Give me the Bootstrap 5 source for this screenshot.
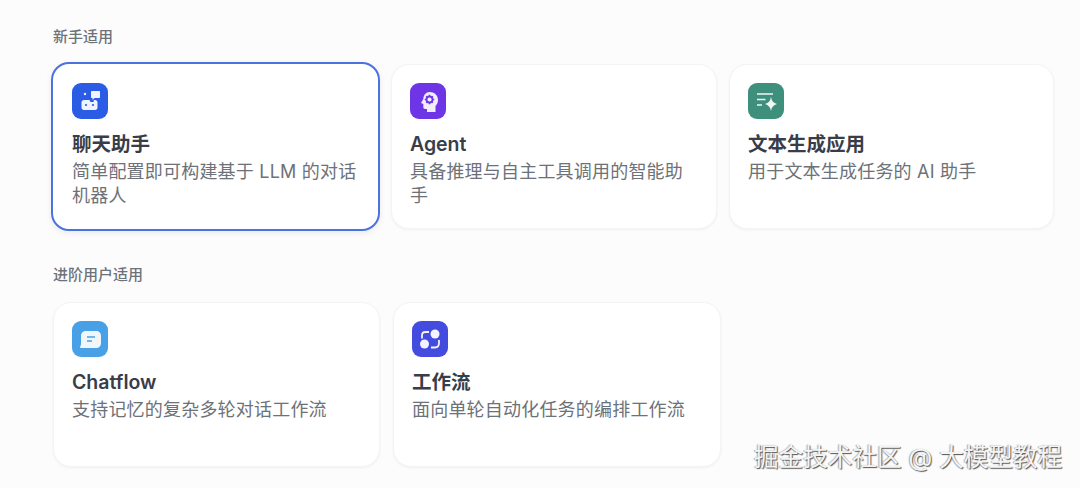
<!DOCTYPE html>
<html lang="zh-CN">
<head>
  <meta charset="UTF-8">
  <meta name="viewport" content="width=device-width, initial-scale=1.0">
  <title>创建应用</title>
  <link href="https://cdn.jsdelivr.net/npm/bootstrap@5.3.0/dist/css/bootstrap.min.css" rel="stylesheet">
  <style>
    html, body { height: 488px; overflow: hidden; }
    body { background: #fcfcfd; font-family: Inter, "Noto Sans CJK SC", sans-serif; }
    .app-page { padding: 28px 0 0 53px; position: relative; height: 488px; }
    .group-label { font-size: 15px; line-height: 18px; font-weight: 500; color: #6d7178; margin: 0; }
    .group-b { margin-top: 35px; }
    .app-row { display: flex; align-items: center; margin-top: 16px; height: 169px; }
    .app-row-b { margin-top: 18px; height: 165px; }
    .app-card { height: 165px; padding: 18px 18px 0 18px; background: #fff; border: 1px solid #f3f4f6; border-radius: 18px; box-shadow: 0 1px 3px rgba(16,24,40,.05); }
    .card-chat { width: 329px; height: 169px; margin-left: -2px; margin-right: 11px; border: 2px solid #4a72e0; padding: 19px 18px 0 19px; box-shadow: 0 2px 6px rgba(16,24,40,.08); }
    .card-agent { width: 326px; margin-right: 12px; }
    .card-text { width: 325px; }
    .card-flow { width: 327px; margin-right: 13px; }
    .card-work { width: 328px; }
    .app-icon { width: 36px; height: 36px; border-radius: 9px; display: flex; align-items: center; justify-content: center; }
    .icon-blue { background: #2b5ce6; }
    .icon-purple { background: #6d35e6; }
    .icon-green { background: #3f8f7d; }
    .icon-sky { background: #48a1e6; }
    .icon-indigo { background: #444ce0; }
    .app-title { font-size: 19.5px; line-height: 26px; font-weight: 600; color: #393d48; margin: 12px 0 0; }
    .app-desc { font-size: 18px; line-height: 24px; letter-spacing: .2px; color: #6d7178; margin: 3px 0 0; }
    .site-mark { position: absolute; left: 754px; top: 441px; font-size: 24.6px; line-height: 32px; white-space: nowrap; color: #f4f4f4; text-shadow: 1px 1px 1px #555, -1px 0 1px #aaa; }
  </style>
</head>
<body>
  <div class="app-page">
    <p class="group-label">新手适用</p>
    <div class="app-row">
      <div class="app-card card-chat">
        <div class="app-icon icon-blue">
          <svg width="24" height="24" viewBox="0 0 24 24" fill="#eef3ff">
            <circle cx="7" cy="5" r="1.200"/>
            <path d="M14 2h7c.7 0 1 .3 1 1v5c0 .7-.3 1-1 1h-4.500l-2 2V9H14c-.7 0-1-.3-1-1V3c0-.7.3-1 1-1z"/>
            <path d="M6 11h5.500l1 2h3l.5-2h1c1.500 0 2.500 1 2.500 2.500v5c0 1.500-1 2.500-2.500 2.500H6c-1.500 0-2.500-1-2.500-2.500v-5C3.500 12 4.500 11 6 11z"/>
            <circle cx="8" cy="16" r="1.100" fill="#2b5ce6"/>
            <circle cx="15" cy="16" r="1.100" fill="#2b5ce6"/>
          </svg>
        </div>
        <h3 class="app-title">聊天助手</h3>
        <p class="app-desc">简单配置即可构建基于 LLM 的对话机器人</p>
      </div>
      <div class="app-card card-agent">
        <div class="app-icon icon-purple">
          <svg width="24" height="24" viewBox="0 0 24 24" fill="#f1edfd">
            <path d="M13.500 3C18.500 3 22 6.500 22 11c0 2.500-1 4.500-2.500 6v6H11v-3H9c-1 0-1.700-.7-1.700-1.700V15L5 14l2.300-4C7.500 6 10 3 13.500 3z"/>
            <circle cx="13.500" cy="10.500" r="3" fill="none" stroke="#6d35e6" stroke-width="1.800"/>
            <path d="M13.500 5.800v1.500M13.500 13.700v1.500M8.800 10.500h1.500M16.700 10.500h1.500M10.200 7.200l1 1M15.800 12.800l1 1M10.200 13.800l1-1M15.800 8.200l1-1" stroke="#6d35e6" stroke-width="1.500"/>
          </svg>
        </div>
        <h3 class="app-title">Agent</h3>
        <p class="app-desc">具备推理与自主工具调用的智能助手</p>
      </div>
      <div class="app-card card-text">
        <div class="app-icon icon-green">
          <svg width="24" height="24" viewBox="0 0 24 24" fill="#f0f7f5">
            <path d="M3 4.200h16v1.600H3zM3 9.700h8.500v1.600H3zM3 15.200h5v1.600H3z"/>
            <path d="M17 8c.7 4 2.500 6 6 7-3.500 1-5.300 3-6 7-.7-4-2.500-6-6-7 3.500-1 5.300-3 6-7z"/>
          </svg>
        </div>
        <h3 class="app-title">文本生成应用</h3>
        <p class="app-desc">用于文本生成任务的 AI 助手</p>
      </div>
    </div>

    <p class="group-label group-b">进阶用户适用</p>
    <div class="app-row app-row-b">
      <div class="app-card card-flow">
        <div class="app-icon icon-sky">
          <svg width="24" height="24" viewBox="0 0 24 24" fill="#eff7fd">
            <path d="M8 4h10c3 0 5 2 5 5v7c0 3-2 5-5 5H3c-1 0-1.300-.8-.8-1.500C3 18.300 3 17.500 3 16V9c0-3 2-5 5-5z"/>
            <path d="M9 9.200h8v1.600H9zM9 13.200h5v1.600H9z" fill="#48a1e6"/>
          </svg>
        </div>
        <h3 class="app-title">Chatflow</h3>
        <p class="app-desc">支持记忆的复杂多轮对话工作流</p>
      </div>
      <div class="app-card card-work">
        <div class="app-icon icon-indigo">
          <svg width="24" height="24" viewBox="0 0 24 24" fill="#f2f3fe">
            <circle cx="17" cy="7" r="4.500"/>
            <circle cx="6.500" cy="17" r="4.500"/>
            <path d="M4 11.500V8.500C4 6.300 5.300 5 7.500 5H11M21 13v3c0 2.800-1.500 4.500-4 4.500h-4" fill="none" stroke="#f2f3fe" stroke-width="1.800"/>
          </svg>
        </div>
        <h3 class="app-title">工作流</h3>
        <p class="app-desc">面向单轮自动化任务的编排工作流</p>
      </div>
    </div>
    <div class="site-mark">掘金技术社区 @ 大模型教程</div>
  </div>
</body>
</html>
